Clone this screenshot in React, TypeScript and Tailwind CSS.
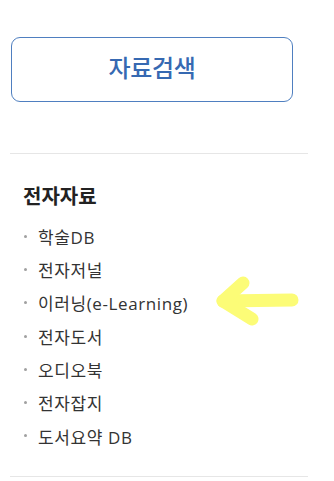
import React from "react";

const items = [
  "학술DB",
  "전자저널",
  "이러닝(e-Learning)",
  "전자도서",
  "오디오북",
  "전자잡지",
  "도서요약 DB",
];

const font = { fontFamily: '"Open Sans", "Noto Sans CJK KR", sans-serif' };

export default function App() {
  return (
    <div className="relative w-[334px] h-[481px] bg-white overflow-hidden" style={font}>
      <div className="pt-[37px] pl-[11px]">
        <button className="w-[282px] h-[65px] rounded-[9px] border border-[#4f7fc0] bg-white flex items-center justify-center pb-[4px] text-[24px] font-medium text-[#3669b2] tracking-[-0.3px]">
          자료검색
        </button>
      </div>
      <div className="mt-[51px] ml-[10px] w-[298px] h-px bg-[#e6e6e6]" />
      <div className="pl-[23px] pt-[30px]">
        <h2 className="text-[20px] leading-[26px] font-bold text-[#222]">전자자료</h2>
        <ul className="mt-[11px] flex flex-col">
          {items.map((item) => (
            <li key={item} className="flex items-center h-[33.3px] text-[17px] text-[#333] tracking-[0.6px]">
              <span className="w-[3px] h-[3px] rounded-full bg-[#a0a0a0] ml-[1px] mr-[11px] -mt-[3px]" />
              <span>{item}</span>
            </li>
          ))}
        </ul>
      </div>
      <div className="mt-[22px] ml-[10px] w-[298px] h-px bg-[#e6e6e6]" />
      {/* highlighter arrow drawn over the page */}
      <svg className="absolute left-[205px] top-[270px]" width="100" height="65" viewBox="0 0 100 65">
        <g stroke="#fcfc70" strokeWidth="13" strokeLinecap="round" strokeLinejoin="round" fill="none" opacity="0.95">
          <path d="M87 30 L18 31" />
          <path d="M38 13 L18 31 L47 49" />
        </g>
      </svg>
    </div>
  );
}
